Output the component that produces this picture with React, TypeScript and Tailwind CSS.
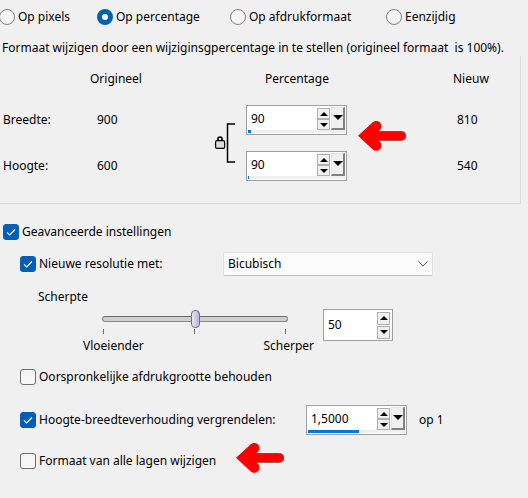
import { useState } from "react";
import type { ReactNode } from "react";

type NumberFieldProps = {
  id: string;
  label: string;
  value: string;
  onChange: (value: string) => void;
  fill: number;
};

function Triangle({ down = false, className = "" }: { down?: boolean; className?: string }) {
  return (
    <svg viewBox="0 0 8 4" className={className} fill="#000" aria-hidden="true">
      <path d={down ? "M0 0h8L4 4z" : "M0 4h8L4 0z"} />
    </svg>
  );
}

function Spinner({ tall = false }: { tall?: boolean }) {
  const button = "flex items-center justify-center border border-[#b0b0b0] bg-[#f0f0f0] w-[13px]";
  const height = tall ? "h-[13px]" : "h-[11px]";

  return (
    <div className={`flex flex-col ${tall ? "gap-px" : ""}`}>
      <button type="button" aria-label="Omhoog" className={`${button} ${height}`}>
        <Triangle className="w-2 h-1 shrink-0" />
      </button>
      <button type="button" aria-label="Omlaag" className={`${button} ${height}`}>
        <Triangle down className="w-2 h-1 shrink-0" />
      </button>
    </div>
  );
}

function NumberField({ id, label, value, onChange, fill }: NumberFieldProps) {
  return (
    <div className="w-[101px] h-[30px] p-px border border-[#a0a0a0] bg-white flex flex-col justify-between">
      <div className="flex">
        <input
          id={id}
          type="text"
          aria-label={label}
          value={value}
          onChange={(e) => onChange(e.target.value)}
          className="flex-1 min-w-0 h-[23px] pl-[3px] outline-none"
        />
        <div className="pt-px">
          <Spinner />
        </div>
        <button
          type="button"
          aria-label="Schuifregelaar tonen"
          className="w-[14px] h-[23px] ml-px flex justify-center pt-[7px] bg-[#f0f0f0] border-r-2 border-b-2 border-t border-l border-t-[#e3e3e3] border-l-[#e3e3e3] border-r-[#808080] border-b-[#808080]"
        >
          <Triangle down className="w-[10px] h-[5px] shrink-0" />
        </button>
      </div>
      <div className="h-[3px] bg-[#f0f0f0]">
        <div className="h-full bg-[#0078d7]" style={{ width: `${fill}%` }} />
      </div>
    </div>
  );
}

function Checkbox({
  checked,
  onChange,
  children,
}: {
  checked: boolean;
  onChange: (checked: boolean) => void;
  children: ReactNode;
}) {
  return (
    <label className="flex items-center gap-[3px] whitespace-nowrap">
      <span className="grid size-4">
        <input
          type="checkbox"
          checked={checked}
          onChange={(e) => onChange(e.target.checked)}
          className="col-start-1 row-start-1 size-4 appearance-none rounded-[3px] border border-[#6e6e6e] bg-[#f6f6f6] checked:border-[#005fb8] checked:bg-[#005fb8]"
        />
        {checked && (
          <svg
            viewBox="0 0 16 16"
            className="col-start-1 row-start-1 size-4 pointer-events-none"
            fill="none"
            stroke="#fff"
            strokeWidth="1.1"
            aria-hidden="true"
          >
            <path d="M4 8.3l2.7 2.7L12 5.5" />
          </svg>
        )}
      </span>
      {children}
    </label>
  );
}

function RedArrow() {
  return (
    <svg viewBox="0 0 48 30" className="w-12 h-[30px]" aria-hidden="true">
      <path d="M16 10.500H43.500a4.200 4.200 0 0 1 0 8.800H16z" fill="#f00" stroke="#8a4a3c" strokeWidth="1" />
      <path
        d="M0 14.800L14.500 1.500A5.300 5.300 0 0 1 22 9L20 11H43.500a3.700 3.700 0 0 1 0 7.800H20L22 20.800A5.300 5.300 0 0 1 14.500 28.300Z"
        fill="#f00"
      />
    </svg>
  );
}

function LockBracket() {
  return (
    <svg viewBox="0 0 20 40" className="w-5 h-10" fill="none" stroke="#000" aria-hidden="true">
      <path d="M20 1h-7.500v38H20" strokeWidth="1.500" />
      <path d="M3 17.500v-1.500a2 2 0 0 1 4 0v1.500" strokeWidth="1.700" />
      <rect x="0.600" y="17.600" width="9" height="7.800" rx="1.300" fill="#dcdcdc" strokeWidth="1.200" />
    </svg>
  );
}

const MODES = [
  { id: "pixels", label: "Op pixels", width: "w-[98px]" },
  { id: "percentage", label: "Op percentage", width: "w-[133px]" },
  { id: "print", label: "Op afdrukformaat", width: "w-[156px]" },
  { id: "single", label: "Eenzijdig", width: "" },
];

export default function App() {
  const [mode, setMode] = useState("percentage");
  const [width, setWidth] = useState("90");
  const [height, setHeight] = useState("90");
  const [advanced, setAdvanced] = useState(true);
  const [resample, setResample] = useState(true);
  const [method, setMethod] = useState("Bicubisch");
  const [sharpness, setSharpness] = useState("50");
  const [keepPrintSize, setKeepPrintSize] = useState(false);
  const [lockRatio, setLockRatio] = useState(true);
  const [ratio, setRatio] = useState("1,5000");
  const [allLayers, setAllLayers] = useState(false);

  return (
    <main className="min-h-screen overflow-hidden bg-[#f0f0f0] text-black text-[12px] leading-4 font-['Noto_Sans',sans-serif]">
      <div className="flex -ml-px pt-[9px]">
        {MODES.map((m) => (
          <label key={m.id} className={`flex shrink-0 items-center gap-[3px] whitespace-nowrap ${m.width}`}>
            <input
              type="radio"
              name="mode"
              checked={mode === m.id}
              onChange={() => setMode(m.id)}
              className="size-4 appearance-none rounded-full border border-[#808080] bg-[#f6f6f6] checked:border-[5px] checked:border-[#005fb8] checked:bg-white"
            />
            {m.label}
          </label>
        ))}
      </div>

      <p className="mt-[15px] pl-[2px] whitespace-nowrap">
        Formaat wijzigen door een wijziginsgpercentage in te stellen (origineel formaat{"\u00a0"} is 100%).
      </p>

      <section className="mr-[7px] h-[148px] border-r border-b border-[#dcdcdc] pl-[3px] grid grid-cols-[87px_125px_31px_112px_95px_1fr] grid-rows-[41px_46px_46px] items-center">
        <span className="col-start-2 pt-1">Origineel</span>
        <span className="col-start-4 pl-[19px] pt-1">Percentage</span>
        <span className="col-start-6 pt-1">Nieuw</span>

        <label htmlFor="breedte">Breedte:</label>
        <span className="pl-[7px]">900</span>
        <div className="row-span-2">
          <LockBracket />
        </div>
        <NumberField id="breedte" label="Breedte" value={width} onChange={setWidth} fill={3} />
        <div className="row-span-2 self-start pt-6">
          <RedArrow />
        </div>
        <span className="pl-1">810</span>

        <label htmlFor="hoogte" className="col-start-1">Hoogte:</label>
        <span className="pl-[7px]">600</span>
        <NumberField id="hoogte" label="Hoogte" value={height} onChange={setHeight} fill={1} />
        <span className="col-start-6 pl-1">540</span>
      </section>

      <div className="pt-5 pl-[3px]">
        <Checkbox checked={advanced} onChange={setAdvanced}>
          Geavanceerde instellingen
        </Checkbox>
      </div>

      <div className="pl-5">
        <div className="flex items-center mt-3">
          <div className="w-[203px]">
            <Checkbox checked={resample} onChange={setResample}>
              Nieuwe resolutie met:
            </Checkbox>
          </div>
          <div className="grid items-center w-[210px]">
            <select
              aria-label="Nieuwe resolutie met"
              value={method}
              onChange={(e) => setMethod(e.target.value)}
              className="col-start-1 row-start-1 h-6 appearance-none pl-1 rounded-[2px] bg-[#fbfbfb] border border-[#e2e2e2] border-b-[#bdbdbd]"
            >
              <option>Bicubisch</option>
              <option>Bilineair</option>
              <option>Pixelformaat</option>
            </select>
            <svg
              viewBox="0 0 10 6"
              className="col-start-1 row-start-1 justify-self-end mr-[5px] w-[10px] h-[6px] pointer-events-none"
              fill="none"
              stroke="#555"
              aria-hidden="true"
            >
              <path d="M0.500 0.500L5 5L9.500 0.500" />
            </svg>
          </div>
        </div>

        <label htmlFor="scherpte" className="block mt-[13px] pl-[18px]">
          Scherpte
        </label>

        <div className="flex items-start mt-1 pl-[63px]">
          <div className="w-[240px]">
            <input
              id="scherpte"
              type="range"
              min="0"
              max="100"
              value={sharpness}
              onChange={(e) => setSharpness(e.target.value)}
              className="block w-[186px] h-[19px] ml-[19px] appearance-none bg-transparent [&::-webkit-slider-runnable-track]:h-[6px] [&::-webkit-slider-runnable-track]:rounded-full [&::-webkit-slider-runnable-track]:border [&::-webkit-slider-runnable-track]:border-[#8a8a8a] [&::-webkit-slider-runnable-track]:border-t-[#6a6a6a] [&::-webkit-slider-runnable-track]:bg-[#cfcfcf] [&::-webkit-slider-thumb]:appearance-none [&::-webkit-slider-thumb]:w-[9px] [&::-webkit-slider-thumb]:h-[18px] [&::-webkit-slider-thumb]:-mt-[7px] [&::-webkit-slider-thumb]:rounded-[4px] [&::-webkit-slider-thumb]:border [&::-webkit-slider-thumb]:border-[#70707c] [&::-webkit-slider-thumb]:bg-linear-to-r [&::-webkit-slider-thumb]:from-[#e8e8f6] [&::-webkit-slider-thumb]:to-[#b4b4d0]"
            />
            <div className="flex justify-between w-[183px] ml-5 mt-px">
              <span className="w-px h-[5px] bg-[#707070]" />
              <span className="w-px h-[5px] bg-[#707070]" />
              <span className="w-px h-[5px] bg-[#707070]" />
            </div>
            <div className="flex justify-between w-[231px] mt-1">
              <span>Vloeiender</span>
              <span>Scherper</span>
            </div>
          </div>
          <div className="w-[70px] h-8 border border-[#a0a0a0] bg-white flex items-center pr-[2px]">
            <input
              type="text"
              aria-label="Scherpte waarde"
              value={sharpness}
              onChange={(e) => setSharpness(e.target.value)}
              className="flex-1 min-w-0 pl-1 outline-none"
            />
            <Spinner tall />
          </div>
        </div>

        <div className="mt-[15px]">
          <Checkbox checked={keepPrintSize} onChange={setKeepPrintSize}>
            Oorspronkelijke afdrukgrootte behouden
          </Checkbox>
        </div>

        <div className="flex items-center mt-5">
          <div className="w-[286px]">
            <Checkbox checked={lockRatio} onChange={setLockRatio}>
              Hoogte-breedteverhouding vergrendelen:
            </Checkbox>
          </div>
          <NumberField id="verhouding" label="Verhouding" value={ratio} onChange={setRatio} fill={53} />
          <span className="pl-3">op 1</span>
        </div>

        <div className="flex mt-2">
          <div className="w-[216px] pt-[10px]">
            <Checkbox checked={allLayers} onChange={setAllLayers}>
              Formaat van alle lagen wijzigen
            </Checkbox>
          </div>
          <RedArrow />
        </div>
      </div>
    </main>
  );
}
